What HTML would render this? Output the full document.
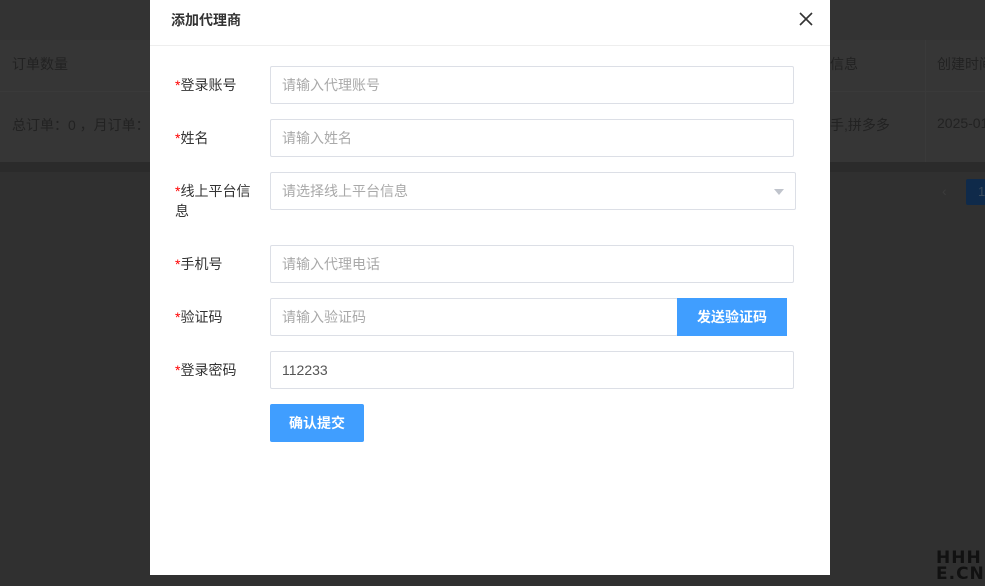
<!DOCTYPE html>
<html><head><meta charset="utf-8"><style>
*{box-sizing:border-box;margin:0;padding:0}
body{width:985px;height:586px;overflow:hidden;background:#303030;font-family:"Liberation Sans","Noto Sans CJK SC",sans-serif;position:relative}
.bg{position:absolute;left:0;top:0;width:985px}
.t{position:absolute;color:#222;font-size:14px;white-space:nowrap}
.modal{position:absolute;left:150px;top:0;width:680px;height:575px;background:#fff}
.hd{height:46px;border-bottom:1px solid #eee;padding-left:21px;line-height:40px;font-size:14px;font-weight:bold;color:#333}
.x{position:absolute;left:647px;top:10px;width:18px;height:18px}
.lab{position:absolute;left:25px;font-size:14px;color:#333;line-height:20px}
.lab b{color:#f00;font-weight:normal}
.in{position:absolute;left:120px;width:524px;height:38px;border:1px solid #dcdfe6;border-radius:2px;font-size:14px;color:#a9a9a9;padding-left:11px;line-height:36px}
.btn{position:absolute;background:#409eff;color:#fff;font-size:14px;font-weight:bold;text-align:center;line-height:38px}
</style></head><body>
<div class="bg" style="top:0;height:40px;background:#333"></div>
<div class="bg" style="top:40px;height:52px;background:#363636;border-bottom:1px solid #3a3a3a"></div>
<div class="bg" style="top:92px;height:70px;background:#363636"></div>
<div class="bg" style="top:162px;height:10px;background:#2b2b2b"></div>
<div class="t" style="left:12px;top:54px">订单数量</div>
<div class="t" style="left:12px;top:115px">总订单：0 ，月订单：</div>
<div class="t" style="left:830px;top:54px">信息</div>
<div class="t" style="left:937px;top:54px">创建时间</div>
<div class="t" style="left:830px;top:115px">手,拼多多</div>
<div class="t" style="left:937px;top:115px">2025-01</div>
<div style="position:absolute;left:925px;top:40px;width:1px;height:122px;background:#3a3a3a"></div>
<div class="t" style="left:942px;top:183px;color:#3c3c3c">&lsaquo;</div>
<div style="position:absolute;left:966px;top:179px;width:20px;height:26px;background:#0f2a4a;border-radius:2px;color:#3a4a5a;font-size:13px;line-height:26px;padding-left:12px">1</div>
<div style="position:absolute;left:936px;top:550px;font:bold 17px/16px 'DejaVu Sans',sans-serif;color:#111;letter-spacing:1px">HHH<br>E.CN</div>
<div class="modal">
<div class="hd">添加代理商</div>
<svg class="x" viewBox="0 0 18 18"><path d="M3 3L15 15M15 3L3 15" stroke="#333" stroke-width="1.6"/></svg>
<div class="lab" style="top:75px"><b>*</b>登录账号</div><div class="in" style="top:66px">请输入代理账号</div>
<div class="lab" style="top:128px"><b>*</b>姓名</div><div class="in" style="top:119px">请输入姓名</div>
<div class="lab" style="top:181px;width:85px"><b>*</b>线上平台信息</div><div class="in" style="top:172px;width:526px">请选择线上平台信息<span style="position:absolute;right:11px;top:16px;border:5px solid transparent;border-top:6px solid #c0c4cc"></span></div>
<div class="lab" style="top:254px"><b>*</b>手机号</div><div class="in" style="top:245px">请输入代理电话</div>
<div class="lab" style="top:307px"><b>*</b>验证码</div><div class="in" style="top:298px;width:408px">请输入验证码</div>
<div class="btn" style="left:527px;top:298px;width:110px;height:38px">发送验证码</div>
<div class="lab" style="top:360px"><b>*</b>登录密码</div><div class="in" style="top:351px;color:#555">112233</div>
<div class="btn" style="left:120px;top:404px;width:94px;height:38px;border-radius:2px">确认提交</div>
</div>
</body></html>
